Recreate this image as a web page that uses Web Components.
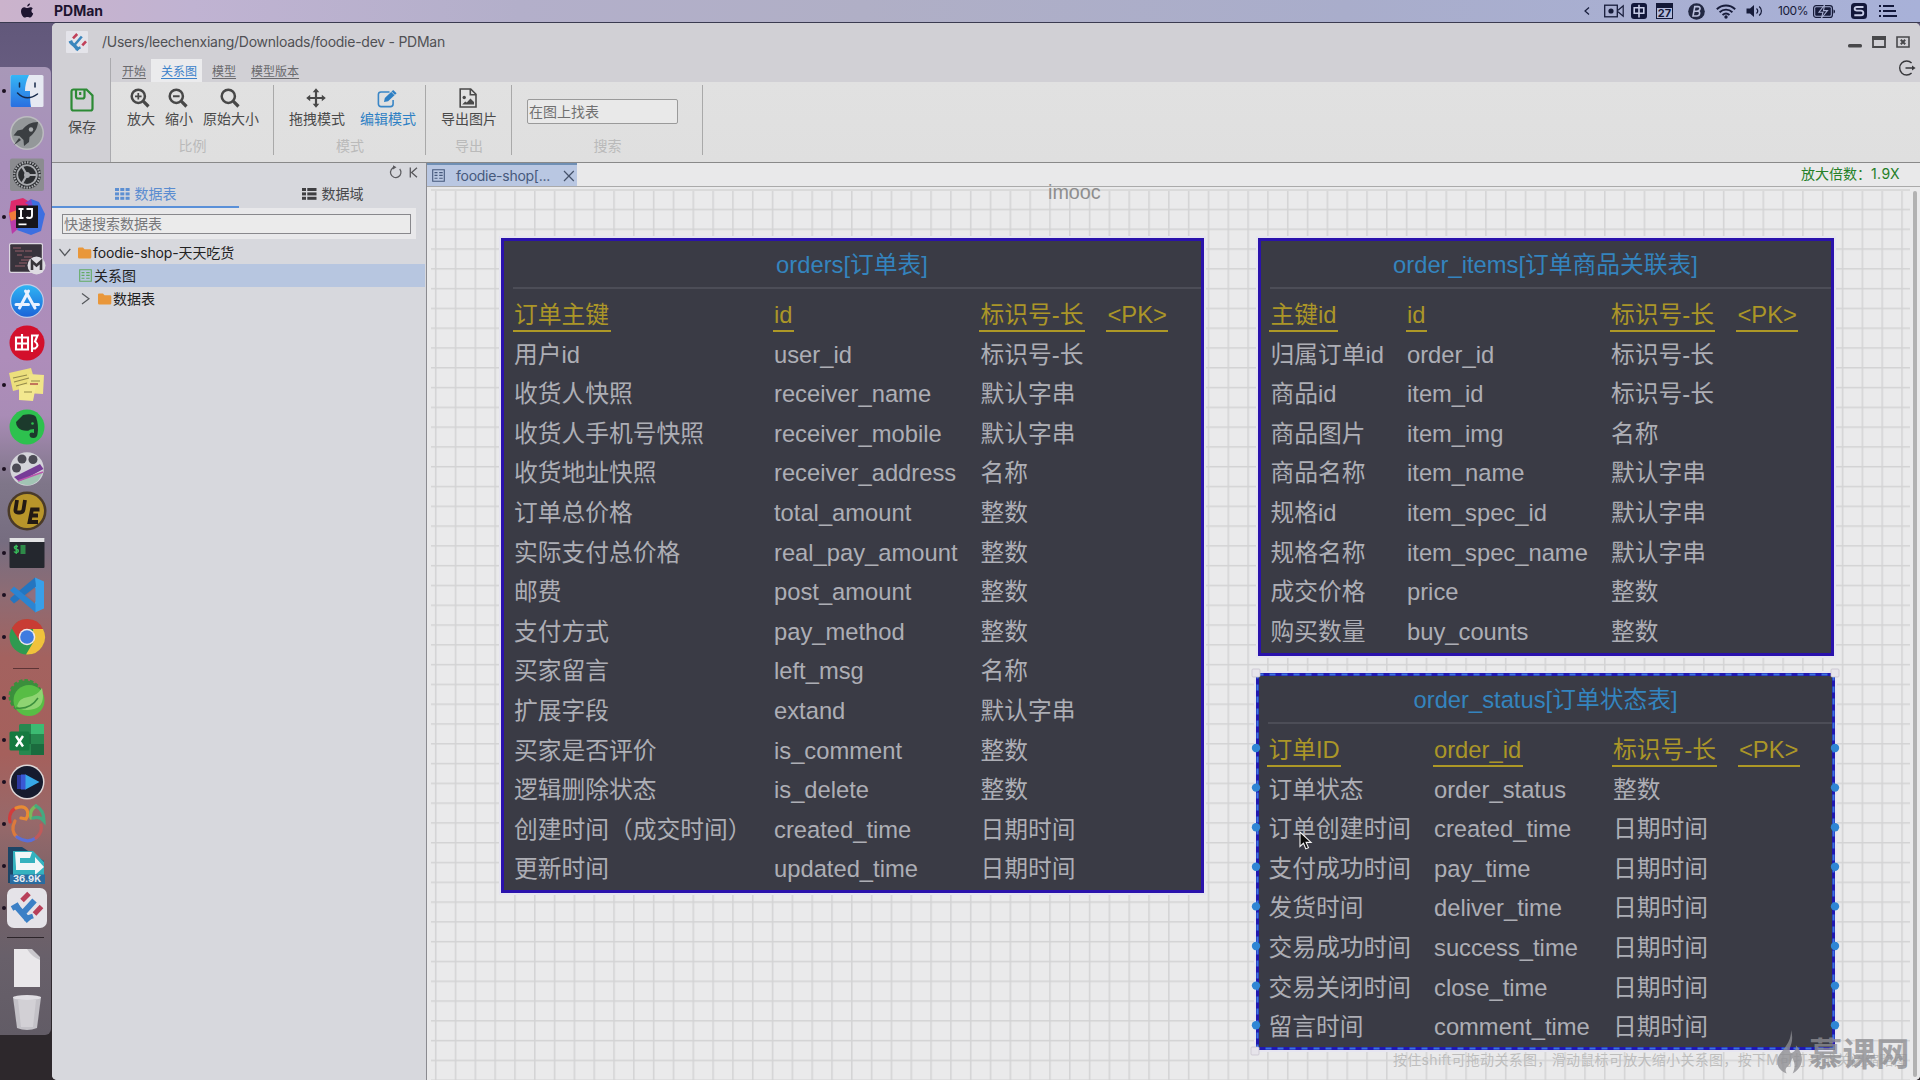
<!DOCTYPE html>
<html lang="zh-CN">
<head>
<meta charset="utf-8">
<title>PDMan</title>
<style>
  html, body { margin: 0; width: 1920px; height: 1080px; overflow: hidden; }
  body { font-family: Inter, "Noto Sans CJK SC", sans-serif; font-size: 14px; color: #444; background: #2d282c; }
</style>
</head>
<body>
<pd-desktop></pd-desktop>
<script>
const define = (name, html, ready) => {
  const tpl = document.createElement('template');
  tpl.innerHTML = html;
  customElements.define(name, class extends HTMLElement {
    connectedCallback() {
      if (this.shadowRoot) return;
      this.attachShadow({ mode: 'open' }).append(tpl.content.cloneNode(true));
      if (ready) ready.call(this, this.shadowRoot);
    }
  });
};

/* Single-line label spread evenly over a given width */
define('fit-text', `<style>:host{display:inline-block;white-space:nowrap}span{display:inline-block}</style><span><slot></slot></span>`, function (r) {
  const w = +this.getAttribute('w'), s = r.querySelector('span');
  const n = this.textContent.length;
  const now = s.getBoundingClientRect().width;
  s.style.letterSpacing = ((w - now) / n).toFixed(3) + 'px';
  this.style.width = w + 'px';
});

/* ---------- icons ---------- */
const ICONS = {
  apple: [16, 16, `<path fill="#1d1430" d="M11 .5c.1 1.6-1.300 3-2.800 3C8 2 9.400.600 11 .500zM13.800 5.600c-2 1.300-1.700 4 .400 4.900-.6 1.900-1.900 4-3.200 4-1 0-1.300-.6-2.600-.6-1.300 0-1.700.6-2.600.6C4 14.500 2 11 2 8.200 2 5.500 3.700 4.200 5.300 4.200c1.200 0 2.100.8 2.900.8.8 0 1.800-.8 3.200-.8.9 0 1.900.500 2.400 1.400z"/>`],
  cam: [20, 14, `<rect x=".7" y="1.200" width="12.600" height="11.600" fill="none" stroke="#171c3a" stroke-width="1.300"/><circle cx="7" cy="7" r="2.600" fill="#171c3a"/><path d="M14 6.200 19.200 1.800v10.400L14 7.800" fill="none" stroke="#171c3a" stroke-width="1.200"/>`],
  zh: [16, 16, `<rect width="16" height="16" rx="3" fill="#12173a"/><path d="M3.200 4.700h9.600v5.600H3.200zM8 1.800v12.600" fill="none" stroke="#c6cbe6" stroke-width="1.600"/>`],
  bt: [17, 17, `<circle cx="8.500" cy="8.500" r="8.300" fill="#222843"/><path d="M6.800 3.600h3.200c3 0 2.600 4-.6 4.400 3.400 0 2.800 5-.6 5H5zM6.400 8.200h3.400" fill="none" stroke="#b9bfdc" stroke-width="1.600"/>`],
  wifi: [20, 15, `<g fill="none" stroke="#171c3a" stroke-width="1.900"><path d="M.8 5.200c5.400-5 13-5 18.400 0M3.600 8.200c3.800-3.500 9-3.500 12.800 0M6.500 11c2.100-1.900 4.900-1.900 7 0"/></g><circle cx="10" cy="13" r="1.700" fill="#171c3a"/>`],
  vol: [18, 14, `<path d="M.5 4.500H4L8 1v12L4 9.500H.500z" fill="#171c3a"/><path d="M10.500 4.500c1.500 1.500 1.500 3.500 0 5M13.200 2.500c3 2.600 3 6.400 0 9" fill="none" stroke="#171c3a" stroke-width="1.200"/>`],
  bat: [23, 13, `<rect x=".6" y=".6" width="18.800" height="11.800" rx="2.500" fill="none" stroke="#171c3a" stroke-width="1.200"/><rect x="2.200" y="2.200" width="15.600" height="8.600" rx="1" fill="#171c3a"/><path d="M20.500 4.500c2 .6 2 3.400 0 4z" fill="#171c3a"/><path d="M11.500 0 6 7.200h4L8.500 13 14.500 5.600h-4z" fill="#171c3a" stroke="#a9b0d2" stroke-width="1.100"/>`],
  sogou: [16, 16, `<rect width="16" height="16" rx="3.500" fill="#12173a"/><path d="M12.500 4H6C2.800 4 3 7.600 6 7.600h4c3.200 0 3 4.600 0 4.600H3.300" fill="none" stroke="#c6cbe6" stroke-width="1.900"/>`],
  menu: [18, 12, `<g fill="#12173a"><rect x="0" y="0" width="2" height="2"/><rect x="0" y="5" width="2" height="2"/><rect x="0" y="10" width="2" height="2"/><rect x="4" y="0" width="11" height="2"/><rect x="4" y="5" width="13" height="2"/><rect x="4" y="10" width="14" height="2"/></g>`],
  logo: [22, 22, `<rect width="22" height="22" rx="1" fill="#e4e4ea"/><g fill="none" stroke-width="2.600"><path d="M7 7.400 11.200 3M16.300 14.400 20 10.300" stroke="#c1415a"/><path d="m4.800 11.500 4 3.500 3.800 4" stroke="#3b86bd" stroke-width="3.400"/><path d="M8.500 14 15.800 5.500" stroke="#3b86bd"/><path d="m3 11.500 3.500-1.300M9.500 18.300l5-2" stroke="#3b86bd" stroke-width="2.400"/></g>`],
  save: [24, 24, `<path d="M3.500 1.500h13L22.500 7.500v13a2 2 0 0 1-2 2h-17a2 2 0 0 1-2-2v-17a2 2 0 0 1 2-2zM6 2v6.500a2 2 0 0 0 2 2h4.500a2 2 0 0 0 2-2V2M10.200 4v3" fill="none" stroke="#2c8a35" stroke-width="2.200"/>`],
  zoomin: [20, 20, `<circle cx="8.300" cy="8.300" r="6.600" fill="none" stroke="#484848" stroke-width="2.500"/><path d="M8.300 5v6.600M5 8.300h6.600" stroke="#484848" stroke-width="1.700"/><path d="m13.200 13.200 5.300 5.300" stroke="#484848" stroke-width="3.200"/>`],
  zoomout: [20, 20, `<circle cx="8.300" cy="8.300" r="6.600" fill="none" stroke="#484848" stroke-width="2.500"/><path d="M5 8.300h6.600" stroke="#484848" stroke-width="1.900"/><path d="m13.200 13.200 5.300 5.300" stroke="#484848" stroke-width="3.200"/>`],
  zoom: [20, 20, `<circle cx="8.300" cy="8.300" r="6.600" fill="none" stroke="#484848" stroke-width="2.500"/><path d="m13.200 13.200 5.300 5.300" stroke="#484848" stroke-width="3.200"/>`],
  move: [20, 20, `<path d="M10 2v16M2 10h16" stroke="#484848" stroke-width="2.200"/><path d="m10 .2 3.300 4H6.700zM10 19.800l3.300-4H6.700zM.2 10l4-3.300v6.600zM19.800 10l-4-3.300v6.600z" fill="#484848"/>`],
  edit: [21, 19, `<path d="M12.500 3H4a2.600 2.600 0 0 0-2.600 2.600V15A2.600 2.600 0 0 0 4 17.600h9.500A2.600 2.600 0 0 0 16.100 15v-4" fill="none" stroke="#3a86c6" stroke-width="1.600"/><path d="m7 13 .8-4 8.400-8 3.400 3.300-8.500 8z" fill="#2f80c4"/><path d="m14.300 2.600 3.400 3.400" stroke="#e0e0e0" stroke-width=".8"/>`],
  image: [18, 20, `<path d="M1.200 1h10.500l5.300 5.300V19H1.200zM11.300 1v5.700H17" fill="none" stroke="#4a4a4a" stroke-width="1.600"/><circle cx="5.200" cy="9.500" r="1.700" fill="#4a4a4a"/><path d="m3.200 16.500 3-3 1.600 1 3.600-4 3.600 3.500v2.500z" fill="#4a4a4a"/>`],
  refresh: [13, 14, `<path d="M10.700 4A5.200 5.200 0 1 1 6 2.200" fill="none" stroke="#5c5c60" stroke-width="1.200"/><path d="M4 .2 7.500 2.300 4 4.400z" fill="#5c5c60"/>`],
  fold: [9, 11, `<path d="M1.300.5v10M8 .8 2.600 5.500 8 10.200" fill="none" stroke="#58585c" stroke-width="1.300"/>`],
  grid: [15, 12, `<g fill="#5c8fd2"><rect width="4" height="3"/><rect x="5.300" width="4" height="3"/><rect x="10.600" width="4" height="3"/><rect y="4.400" width="4" height="3"/><rect x="5.300" y="4.400" width="4" height="3"/><rect x="10.600" y="4.400" width="4" height="3"/><rect y="8.800" width="4" height="3"/><rect x="5.300" y="8.800" width="4" height="3"/><rect x="10.600" y="8.800" width="4" height="3"/></g>`],
  list: [15, 12, `<g fill="#3f3f42"><rect width="4" height="3"/><rect x="5.300" width="9.200" height="3"/><rect y="4.400" width="4" height="3"/><rect x="5.300" y="4.400" width="9.200" height="3"/><rect y="8.800" width="4" height="3"/><rect x="5.300" y="8.800" width="9.200" height="3"/></g>`],
  down: [14, 9, `<path d="m1.500 1 5.300 6.500L12.300 1" fill="none" stroke="#55585c" stroke-width="1.200"/>`],
  right: [9, 14, `<path d="m1 1.500 7 5.300-7 5.300" fill="none" stroke="#55585c" stroke-width="1.200"/>`],
  folder: [14, 12, `<path d="M0 1.500Q0 .5 1 .5h4l1.500 1.700H12q1.300 0 1.300 1.200v6.800q0 1.300-1.300 1.300H1.300Q0 11.500 0 10.200z" fill="#e9973a"/>`],
  sheet: [13, 13, `<path d="M.7.7h11.600v11.600H.7zM2.500 3.600h3M7.200 3.600h3.500M2.500 6.400h3M7.200 6.400h3.500M2.500 9.200h3M7.200 9.200h3.500" fill="none" stroke="currentColor" stroke-width="1.100"/>`],
  close: [12, 12, `<path d="m1 1 9.800 10M10.800 1 1 11" stroke="#46536b" stroke-width="1.200"/>`],
  min: [14, 12, `<rect y="8" width="14" height="3.600" rx="1.500" fill="#48484b"/>`],
  max: [14, 12, `<path d="M1 1h12v10H1z" fill="none" stroke="#48484b" stroke-width="1.800"/><rect width="14" height="4" fill="#48484b"/>`],
  quit: [14, 12, `<path d="M1 1h12v10H1z" fill="none" stroke="#48484b" stroke-width="1.600"/><path d="m4.800 3.800 4.400 4.400M9.200 3.800 4.800 8.200" stroke="#48484b" stroke-width="2"/>`],
  exit: [17, 16, `<path d="M12.600 3A7 7 0 1 0 12.600 13M6.500 8h8" fill="none" stroke="#38383c" stroke-width="1.400"/><path d="M13 5.400 16.600 8 13 10.600z" fill="#38383c"/>`],
  flame: [26, 44, `<path d="M14 0c2.500 9 .5 13-1 18-1 4 .5 6 2.600 4.600 2.600-1.600 3.600-4.300 3.300-7.400 4.600 5 8 13 4.700 20-1.600 3.700-4.600 6.300-8 8.300 2.300-5 3-10-.3-15.500C13.600 32 13 35 10 37c-2 2-1.600 4.600-.3 6.600C4 41.600-.3 37 .4 30.500.8 25 4.500 22.500 8 17.500 11.300 13 14.300 8 14 0z" fill="#8d8d92" fill-opacity=".78"/>`],
  cursor: [14, 20, `<path d="M1 1v14.500l3.500-3.200 2.300 5.600 2.700-1.100-2.400-5.400h5z" fill="#0c0c0c" stroke="#f2f2f2" stroke-width="1.100"/>`],
};
define('pd-icon', `<style>:host{display:inline-block;flex:none;line-height:0}svg{display:block;overflow:visible}</style><svg></svg>`, function (r) {
  const [w, h, body] = ICONS[this.getAttribute('name')];
  const s = r.querySelector('svg');
  s.setAttribute('viewBox', `0 0 ${w} ${h}`); s.setAttribute('width', w); s.setAttribute('height', h);
  s.innerHTML = body;
});

/* ---------- dock ---------- */
const APPS = {
  finder: `<defs><linearGradient id="g" x2="0" y2="1"><stop stop-color="#35b6f6"/><stop offset="1" stop-color="#2a6fe0"/></linearGradient></defs><rect x="3.500" y="4" width="33" height="32" rx="1.500" fill="#e6e9f2"/><path d="M5 4h17c-3 6-4 11-4 16h5c0 6 0 11 1 16H5q-1.500 0-1.500-1.500v-29Q3.500 4 5 4z" fill="url(#g)"/><path d="M10.500 22q9 9 20 1M12.500 12v4M28 12v4" fill="none" stroke="#16294a" stroke-width="1.500" stroke-linecap="round"/>`,
  rocket: `<circle cx="20" cy="20" r="17" fill="#bcbcc0"/><circle cx="20" cy="20" r="15.500" fill="#94989a"/><path d="M31 9c-7 0-12 3-15.500 7.500l-5 1-4 5 6 .5 4 4 .5 6 5-4 .5-5C27 20.500 30.500 16 31 9z" fill="#3b3f42"/><circle cx="24" cy="16.500" r="2.200" fill="#a9adaf"/><path d="m12 25-5 7 7-5z" fill="#3b3f42"/>`,
  gear: `<rect x="3" y="3.500" width="34" height="32.500" rx="2" fill="#8b8c90"/><circle cx="20" cy="20" r="14" fill="#2c2e31"/><circle cx="20" cy="20" r="12.700" fill="none" stroke="#a9abaf" stroke-width="2.200" stroke-dasharray="1.600 1.100"/><circle cx="20" cy="20" r="9.800" fill="none" stroke="#a9abaf" stroke-width="1.800"/><path d="M20 20h9.500M20 20l-5-8.500M20 20l-5 8.500" stroke="#a9abaf" stroke-width="2.200"/><circle cx="20" cy="20" r="3" fill="#a9abaf"/>`,
  ij: `<path d="m4 4 12-3 10 6-14 14-10-4z" fill="#dd2a6b"/><path d="m2 17 8 1 3 12-8 7z" fill="#b93ba8"/><path d="m2 16 8-3 2 8-8 3z" fill="#ef7c3a"/><path d="m24 2 8 3 6 12-4 17-10 4-14-5z" fill="#3d6fe0"/><path d="m24 2-6 4 8 4z" fill="#7a4ac8"/><rect x="9" y="8.500" width="22" height="22.500" fill="#17151a"/><path d="M11.500 12h5M14 12v9M11.500 21h5M19.500 12h5.500v6.500q0 2.500-2.500 2.500t-3-1" fill="none" stroke="#fff" stroke-width="1.900"/><rect x="11.500" y="26.500" width="8" height="1.700" fill="#fff"/>`,
  mind: `<rect x="2" y="4" width="34" height="30" rx="2" fill="#dcd6e0"/><rect x="3.200" y="5.200" width="31.600" height="27.600" rx="1" fill="#38333c"/><path d="M6 9h8M8 12h9M10 16h5M17 18h8M14 21h12M12 24h8M8 27h10M18 12h7" stroke="#96606a" stroke-width="1.200"/><circle cx="29.500" cy="26.500" r="9" fill="#dedce2"/><path d="M25 31v-8.500l4.500 4 4.500-4V31" fill="none" stroke="#37343a" stroke-width="2.600"/>`,
  store: `<defs><linearGradient id="g" x2="0" y2="1"><stop stop-color="#2fb4f3"/><stop offset="1" stop-color="#1c64d8"/></linearGradient></defs><circle cx="20" cy="20" r="17" fill="#c4cae6"/><circle cx="20" cy="20" r="15.800" fill="url(#g)"/><path d="m21.500 10-9 17M18.500 10l9.500 17M9 23.500h12.500M26 23.500h5.500" stroke="#eaf2ff" stroke-width="3" stroke-linecap="round"/>`,
  mail: `<circle cx="20" cy="20" r="17.500" fill="#d3102c"/><path d="M9 14.500h12v12H9zM15 11v15.500M9 20.500h12M25 29V12.500h5.500l-2.500 6q5 4 0 7h-3" fill="none" stroke="#fff" stroke-width="2.100"/>`,
  notes: `<path d="m2 8 22-5 5 17-23 6z" fill="#ecdf7c"/><path d="m22 9 15 1-1 19-17-1z" fill="#f0e489"/><path d="m12 19 17 2-3 15-14-1z" fill="#f3e88f"/><path d="m6 13 14-3M7 17l15-4M24 16h9M17 27h8M9 21l11-3" stroke="#948a4c" stroke-width="1.200"/><path d="M23 19h8" stroke="#b3504c" stroke-width="1.500"/>`,
  ever: `<circle cx="20" cy="20" r="17.500" fill="#2dc14e"/><path d="m9 15 7-7q10-2 13 2 3 8 1.500 17-.5 4-4 4-4 0-4-3.500 0-2 2.500-2l2 .5v-4q-4 0-5 1.500-7 1-11-3-2-2-2-5.500z" fill="#1c3a2c"/><circle cx="25.500" cy="16.500" r="1.300" fill="#2dc14e"/>`,
  film: `<circle cx="20" cy="20" r="16.800" fill="#d4d4da"/><circle cx="15" cy="10" r="4.500" fill="#4b4a54"/><circle cx="26" cy="10.500" r="4.500" fill="#4b4a54"/><circle cx="9.500" cy="19" r="4.500" fill="#4b4a54"/><path d="m7 28 26-13 3.500 5-24 13z" fill="#773d97"/><path d="m10 33 26-10-5 9q-10 8-21 1z" fill="#a2c4b4"/><path d="m11 32 25-9" stroke="#bb55ad" stroke-width="1.600"/>`,
  ue: `<circle cx="20" cy="20" r="19.500" fill="#4a3a28"/><circle cx="20" cy="20" r="17" fill="#b8952a"/><path d="m10 9-1.500 9.500q-.5 3 2.500 3h2q3 0 3.500-3L18 9M32.500 18.500h-7.500l-2.500 12.500h8.500M24 24.500h7" fill="none" stroke="#231a14" stroke-width="3.800"/>`,
  term: `<rect x="2.500" y="5" width="35" height="30" rx="1" fill="#24272e"/><path d="M2.500 5h35v4h-35z" fill="#e2e2e4"/><path d="M11 13.500q-4-1-3.600 1.200c.4 2.500 4 .6 4 3.300 0 2-3.600 1.800-4.400.5M9.200 11.800V21" fill="none" stroke="#37bd5a" stroke-width="1.400"/><rect x="13.500" y="12" width="5" height="9" fill="#2e8a48"/>`,
  code: `<path d="m28 2.500 9 4v27l-9 4z" fill="#389fe8"/><path d="m28 2.500 1 9L7 28.500l-4-4 1-2z" fill="#2475c0"/><path d="M28.500 37.500V29L7 11.500l-4 4z" fill="#2b84d2"/><path d="M28.500 13v14L19.500 20z" fill="#8f7080"/>`,
  chrome: `<circle cx="20" cy="20" r="17.500" fill="#2f9a50"/><path d="M4.800 11.300A17.500 17.500 0 0 1 36 12H20l-8 11z" fill="#c83c34"/><path d="M36 12A17.500 17.500 0 0 1 19 37.500l8-13.500-1-12z" fill="#f0c23c"/><circle cx="20" cy="20" r="8.300" fill="#f0e8e8"/><circle cx="20" cy="20" r="6.800" fill="#3f7be0"/>`,
  spring: `<circle cx="18.500" cy="18" r="15.500" fill="#3b8f3c" stroke="#3b8f3c" stroke-width="3" stroke-dasharray="3.500 2"/><circle cx="22" cy="22.500" r="15.500" fill="#58bd45"/><path d="M35 10q4 18-8 21-12 3-17-3 2-8 11-9 9-1 14-9z" fill="#8fd472"/><path d="M9 30q14 2 22-10" fill="none" stroke="#3b8f3c" stroke-width="1.500"/>`,
  excel: `<rect x="12" y="4" width="25" height="31" rx="1.500" fill="#27884f"/><path d="M24 4h13v10H24z" fill="#3cbb72"/><path d="M12 14h12v10H12z" fill="#1b6b3e"/><path d="M24 24h13v11H24z" fill="#1b6b3e"/><rect x="2.500" y="11.500" width="20" height="19" rx="1.500" fill="#157a40"/><path d="m9 16 7 10.500M16 16 9 26.500" stroke="#fff" stroke-width="2.400"/>`,
  play: `<circle cx="20" cy="20" r="17.500" fill="#ddd6d6"/><circle cx="20" cy="20" r="16" fill="#161b2e"/><path d="M10 13h5v14h-5z" fill="#2c38a0"/><path d="M14 12.500h5v15h-5z" fill="#3a58d4"/><path d="m18.500 12.500 14 7.500-14 7.500z" fill="#37a8e8"/>`,
  heart: `<g fill="none" stroke-width="3.200" stroke-linecap="round"><path d="M3 18Q1 8 9 4" stroke="#d23c3c"/><path d="M9 4q8-3 11 2 2 5-1 9l-5-1" stroke="#e88a34"/><path d="M24 14q-2-8 5-12" stroke="#7ab85a"/><path d="M29 2q8 4 8 15-4-5-11-3" stroke="#45a980"/><path d="M8 17q-5 10 2 16" stroke="#dc7a3c"/><path d="M10 33q10 7 19 1" stroke="#5a6fd8"/><path d="M29 34q7-6 5-13" stroke="#c05a5a"/></g>`,
  neat: `<path d="M1 1h14l22 14v22H1z" fill="#1d4566"/><path d="M6 5h20l11 11v21H6z" fill="#34b2bf"/><path d="M8 6h17l-2 6H13v9H9z" fill="#f0f6f8"/><path d="M9 17h19v-6l9 10-9 8v-5H9z" fill="#f0f6f8"/><rect x="3" y="28.500" width="35" height="9.500" fill="#2a6ba0"/>`,
  pdman: `<rect x="0" y="0" width="40" height="40" rx="7" fill="#e5e3e8"/><g fill="none"><path d="m15 12.500 7-7M27.500 26l7-7.500" stroke="#b8405a" stroke-width="5"/><path d="m8 17 7 8 7 8M17 24 27.500 12.500" stroke="#3c80c6" stroke-width="6"/><path d="m5 20.500 7-4M17 31l9-3" stroke="#3c80c6" stroke-width="5"/></g>`,
  doc: `<path d="M7 1h17l9 9v29H7z" fill="#e9e7ea"/><path d="M20 1q5 8 13 11V9l-8-8z" fill="#c9c7cc"/>`,
  trash: `<path d="m6 5 4 31q10 4 20 0l4-31z" fill="#c3c1c7"/><path d="m11 8 3 27h12l3-27z" fill="#d2d0d5"/><ellipse cx="20" cy="5.500" rx="14" ry="2.500" fill="#e0dee3"/>`,
};
define('dock-item', `<style>
:host{display:grid;grid-template-columns:7px 40px;height:42px;align-items:center;width:50px}
i{width:4px;height:4px;border-radius:50%;margin-left:2px}
:host([on]) i{background:#1c1020}
div{position:relative;height:40px}
svg{display:block;width:40px;height:40px}
b{position:absolute;left:0;right:0;top:28px;text-align:center;font:700 9.500px/10px Inter,sans-serif;color:#e6ecf2}
</style><i></i><div><svg viewBox="0 0 40 40"></svg><b><slot></slot></b></div>`, function (r) {
  r.querySelector('svg').innerHTML = APPS[this.getAttribute('app')];
});
define('mac-dock', `<style>
:host{display:flex;flex-direction:column;width:51px;box-sizing:border-box;height:968px;margin-top:44px;padding-top:3px;border-radius:0 6px 6px 0;
background:linear-gradient(#a898b8 0,#a88fbb 10%,#ae8dba 30%,#a98cb6 36%,#7f7689 43%,#766d80 49%,#8c6c75 54%,#a3625f 61%,#a5605c 71%,#97696a 78%,#746168 86%,#68606a 92%,#625c66 100%)}
hr{border:0;height:1px;width:26px;background:#5d3436;margin:10px 0 8px 13px;flex:none}
hr.b{background:#2c2429;width:37px;margin:8px 0 8px 7px}
dock-item{flex:none}.l{height:44px}
</style>
<dock-item app="finder" on></dock-item><dock-item app="rocket"></dock-item><dock-item app="gear"></dock-item><dock-item app="ij" on></dock-item><dock-item app="mind"></dock-item><dock-item app="store"></dock-item><dock-item app="mail"></dock-item><dock-item app="notes" on></dock-item><dock-item app="ever"></dock-item><dock-item app="film" on></dock-item><dock-item app="ue"></dock-item><dock-item app="term" on></dock-item><dock-item app="code" on></dock-item><dock-item app="chrome" on></dock-item><hr>
<dock-item app="spring" on></dock-item><dock-item app="excel" on></dock-item><dock-item app="play" on></dock-item><dock-item app="heart" on></dock-item><dock-item app="neat" on>36.9K</dock-item><dock-item app="pdman" on></dock-item><hr class="b">
<dock-item class="l" app="doc"></dock-item><dock-item class="l" app="trash"></dock-item>`);

/* ---------- menu bar ---------- */
define('mac-menubar', `<style>
:host{display:flex;align-items:center;height:23px;box-sizing:border-box;border-bottom:1px solid #3a3a50;color:#171c3a;
background:linear-gradient(90deg,#cbb3cc 0,#c0b3d2 10%,#b3afca 27%,#b0afc6 45%,#a9adcb 70%,#a8b1d8 100%)}
.l{display:flex;align-items:center;padding-left:19px;gap:19px;color:#1d1430;font-weight:700;font-size:14px;padding-bottom:1px}
.r{margin-left:auto;display:flex;align-items:center;padding-right:23px}
.r>*{display:block}
.cal{width:17px;height:16px;background:#141938;color:#141938;display:flex;align-items:flex-end;justify-content:center}
.cal b{background:#b4bbdb;width:14.500px;height:10.500px;margin-bottom:1px;font:700 11px/11px Inter,sans-serif;text-align:center}
</style>
<div class="l"><pd-icon name="apple"></pd-icon><fit-text w="49">PDMan</fit-text></div>
<div class="r">
<svg width="6" height="8" style="margin-right:14px"><path d="M5 .5 1 4l4 3.500" fill="none" stroke="#171c3a" stroke-width="1.200"/></svg>
<pd-icon name="cam" style="margin-right:7px"></pd-icon><pd-icon name="zh" style="margin-right:9px"></pd-icon>
<div class="cal" style="margin-right:15px"><b>27</b></div>
<pd-icon name="bt" style="margin-right:11px"></pd-icon><pd-icon name="wifi" style="margin-right:10px"></pd-icon><pd-icon name="vol" style="margin-right:14px"></pd-icon>
<fit-text w="30" style="font-size:12px;margin:0 5px 1px 0">100%</fit-text><pd-icon name="bat" style="margin-right:15px"></pd-icon><pd-icon name="sogou" style="margin-right:12px"></pd-icon><pd-icon name="menu"></pd-icon>
</div>`);

/* ---------- ribbon ---------- */
define('ribbon-group', `<style>
:host{display:flex;flex-direction:column;align-items:center;box-sizing:border-box;height:70px;margin-top:3px;border-right:1px solid #a9a9a9}
.row{display:flex;height:52px;padding-top:3px;box-sizing:border-box;width:100%}
.cap{font-size:14px;line-height:18px;color:#bababa;padding-left:1px}
</style><div class="row"><slot></slot></div><div class="cap"></div>`, function (r) {
  r.querySelector('.cap').textContent = this.getAttribute('caption');
});
define('tool-button', `<style>
:host{display:flex;flex-direction:column;align-items:center;font-size:14px;line-height:18px;color:#4a4a4a;white-space:nowrap;width:max-content}
:host([on]){color:#2f80c4}
div{height:20px;display:flex;align-items:center;margin:0 2px 2px 0}
</style><div></div><slot></slot>`, function (r) {
  const i = document.createElement('pd-icon');
  i.setAttribute('name', this.getAttribute('icon'));
  r.querySelector('div').append(i);
});
define('pd-header', `<style>
:host{display:grid;grid-template-columns:59px 1fr;grid-template-rows:35px 24px 80px;height:140px;background:#d1d0d5;border-bottom:1px solid #898989;box-sizing:border-box}
.title{grid-column:1/3;display:flex;align-items:center;padding:3px 10px 0 14px;height:35px;box-sizing:border-box;font-size:14px;color:#505054;gap:14px}
.title fit-text{margin-bottom:1px}
.win{margin-left:auto;display:flex;gap:10px}
.save{grid-row:2/4;border-right:1px solid #aaaaae;box-sizing:border-box;display:flex;flex-direction:column;align-items:center;padding-top:30px;line-height:18px;gap:6px;color:#4a4a4a;padding-left:2px}
.tabs{display:flex;align-items:stretch;font-size:12px;line-height:27px;color:#6a6a6e}
.tabs span{text-decoration:underline;text-underline-offset:2px;text-decoration-thickness:1px}
.tabs .on{background:#ebebed;color:#3c82ca;padding:0 5px 0 10px;margin:1px 10px 0 5px;line-height:25px}
.tabs pd-icon{margin:2px 4px 0 auto;align-self:flex-start}
.rib{display:flex;background:linear-gradient(#e1e1e1,#dfdfdf)}
.in{box-sizing:border-box;border:1px solid #9a9a9a;border-radius:2px;width:151px;height:25px;background:#e9e9e9;padding-left:1px;font-size:14px;color:#707070;line-height:23px}
</style>
<div class="title"><pd-icon name="logo"></pd-icon><fit-text w="343">/Users/leechenxiang/Downloads/foodie-dev - PDMan</fit-text>
<div class="win"><pd-icon name="min"></pd-icon><pd-icon name="max"></pd-icon><pd-icon name="quit"></pd-icon></div></div>
<div class="save"><pd-icon name="save"></pd-icon>保存</div>
<div class="tabs"><span style="margin-left:11px">开始</span><span class="on">关系图</span><span style="margin-right:15px">模型</span><span>模型版本</span><pd-icon name="exit"></pd-icon></div>
<div class="rib">
<ribbon-group caption="比例" style="width:163px"><tool-button icon="zoomin" style="margin-left:16px">放大</tool-button><tool-button icon="zoomout" style="margin-left:10px">缩小</tool-button><tool-button icon="zoom" style="margin-left:10px">原始大小</tool-button></ribbon-group>
<ribbon-group caption="模式" style="width:152px"><tool-button icon="move" style="margin-left:15px">拖拽模式</tool-button><tool-button on icon="edit" style="margin-left:15px">编辑模式</tool-button></ribbon-group>
<ribbon-group caption="导出" style="width:86px"><tool-button icon="image" style="margin-left:15px">导出图片</tool-button></ribbon-group>
<ribbon-group caption="搜索" style="width:191px"><div class="in" style="margin:11px 0 0 15px">在图上找表</div></ribbon-group>
</div>`);

/* ---------- sidebar ---------- */
define('tree-row', `<style>
:host{display:flex;align-items:center;height:23px;line-height:23px;font-size:14px;color:#222;width:373px;box-sizing:border-box;white-space:nowrap}
:host([on]){background:#b7c6e0}
.c{width:14px;display:flex;justify-content:center;margin-right:6px}
.i{width:15px;display:flex}
</style><div class="c"></div><div class="i"></div><slot></slot>`, function (r) {
  for (const [k, sel] of [['caret', '.c'], ['icon', '.i']]) {
    if (!this.hasAttribute(k)) continue;
    const i = document.createElement('pd-icon');
    i.setAttribute('name', this.getAttribute(k));
    if (k === 'icon') i.style.color = '#63ab62';
    r.querySelector(sel).append(i);
  }
});
define('pd-sidebar', `<style>
:host{display:flex;flex-direction:column;width:375px;box-sizing:border-box;border-right:1px solid #8b8b90;background:#d7d8dd}
.tools{height:20px;display:flex;justify-content:flex-end;align-items:center;gap:7px;padding:0 8px 2px 0;box-sizing:border-box}
.tabs{display:flex;height:25px}
.tabs div{flex:1;display:flex;justify-content:center;align-items:center;gap:5px;line-height:20px;padding-bottom:3px;box-sizing:border-box;padding-top:2px;border-bottom:2px solid transparent;color:#48484c}
.tabs .on{color:#5a8cd0;border-color:#5a90d8}
.s{background:#e8e8ea;width:364px;height:31px;box-sizing:border-box;padding:6px 0 0 10px}
.in{width:349px;height:20px;box-sizing:border-box;border:1px solid #88888c;background:#ebebeb;line-height:18px;padding-left:1px;color:#77777a}
</style>
<div class="tools"><pd-icon name="refresh"></pd-icon><pd-icon name="fold"></pd-icon></div>
<div class="tabs"><div class="on"><pd-icon name="grid"></pd-icon>数据表</div><div><pd-icon name="list"></pd-icon>数据域</div></div>
<div class="s"><div class="in">快速搜索数据表</div></div>
<tree-row caret="down" icon="folder" style="padding-left:6px;margin-top:2px"><fit-text w="141">foodie-shop-天天吃货</fit-text></tree-row>
<tree-row on icon="sheet" style="padding-left:7px">关系图</tree-row>
<tree-row caret="right" icon="folder" style="padding-left:26px">数据表</tree-row>`);

/* ---------- diagram ---------- */
define('er-table', `<style>
:host{display:block;position:absolute;box-sizing:border-box;background:#3a3b45;border:3px solid #2a12ac;box-shadow:0 0 0 2px #e6e5f0;
font:23.750px/39.600px "Liberation Sans","Noto Sans CJK SC",sans-serif;color:#adaeb5}
h3{margin:0;font:inherit;color:#3484be;text-align:center;height:48px;line-height:48px;box-sizing:border-box;border-bottom:2px solid #4c4d57;margin-left:9px;padding-right:9px}
.row{display:grid;white-space:nowrap;height:39.600px}
.body{padding-top:6px}
.pk{color:#ab9628}
.pk span{display:inline-block;height:36.500px;padding:0 1.500px;margin-left:-1.500px;box-sizing:border-box;border-bottom:2px solid #ad9826}
:host([sel]){border-color:#2018b0}
svg{position:absolute;inset:-3px;overflow:visible;display:none}
:host([sel]) svg{display:block}
</style><h3></h3><div class="body"></div><svg></svg>`, function (r) {
  r.querySelector('h3').textContent = this.getAttribute('name');
  const body = r.querySelector('.body');
  const cols = this.getAttribute('cols');
  const lines = this.textContent.trim().split('\n');
  lines.forEach((line, i) => {
    const row = document.createElement('div');
    row.className = 'row' + (i ? '' : ' pk');
    row.style.gridTemplateColumns = cols;
    row.style.paddingLeft = this.getAttribute('pad') + 'px';
    line.trim().split('|').forEach(t => {
      const cell = document.createElement('div'), s = document.createElement('span');
      s.textContent = t; cell.append(s); row.append(cell);
    });
    body.append(row);
  });
  if (this.hasAttribute('sel')) {
    const w = this.offsetWidth, h = this.offsetHeight, s = r.querySelector('svg');
    s.setAttribute('width', w); s.setAttribute('height', h);
    let g = `<rect x="1.500" y="1.500" width="${w - 3}" height="${h - 3}" fill="none" stroke="#3b74de" stroke-width="2" stroke-dasharray="6 6"/>`;
    for (let i = 0; i < lines.length; i++) g += `<circle cx="0" cy="${75 + i * 39.600}" r="4.200" fill="#2f86d4"/><circle cx="${w}" cy="${75 + i * 39.600}" r="4.200" fill="#2f86d4"/>`;
    for (const [x, y] of [[0, 0], [w, 0], [-1, h + 1]]) g += `<rect x="${x - 4}" y="${y - 4}" width="8" height="8" rx="1" fill="#e6e4ea" stroke="#c4c0cc" stroke-width=".7"/>`;
    s.innerHTML = g;
  }
});
define('pd-canvas', `<style>
:host{display:block;position:relative;flex:1;background:#eaeaeb;border-top:1px solid #aaa;box-sizing:border-box}
.grid{position:absolute;left:0;top:0}
.im{position:absolute;left:621px;top:-6px;font:19.750px/23px "Liberation Sans",sans-serif;color:#8e8e8e}
.bar{position:absolute;left:1486px;top:4px;width:4px;height:886px;background:#b2b2b2;border-radius:2px}
.hint{position:absolute;left:966px;top:863px;font-size:14px;line-height:20px;color:#bdbdbd;white-space:nowrap;width:516px}
.wm{position:absolute;left:1350px;top:843px;display:flex;align-items:center;gap:6px;font:700 33.500px/44px "Noto Sans CJK SC",sans-serif;color:rgba(142,142,146,.78)}
.cur{position:absolute;left:872px;top:644px}
</style>
<svg class="grid" width="1493" height="894"><defs><pattern id="p" x="7.900" y="21.700" width="19.815" height="19.790" patternUnits="userSpaceOnUse"><path d="M.8 0v19.800M0 .8h19.820" stroke="#d3d3d4" stroke-width="1.500" fill="none"/></pattern></defs><rect x="4" y="3.500" width="1479" height="890" fill="url(#p)"/><path d="M4 3h1479" stroke="#dadada" stroke-width="2"/></svg>
<div class="im">imooc</div>
<div class="hint"><fit-text w="515">按住shift可拖动关系图，滑动鼠标可放大缩小关系图，按下M可打开或关闭缩略图</fit-text></div>
<er-table name="orders[订单表]" style="left:73.500px;top:51px;width:703px;height:655px" pad="10.5" cols="260px 206.5px 127px 80px">订单主键|id|标识号-长|&lt;PK&gt;
用户id|user_id|标识号-长
收货人快照|receiver_name|默认字串
收货人手机号快照|receiver_mobile|默认字串
收货地址快照|receiver_address|名称
订单总价格|total_amount|整数
实际支付总价格|real_pay_amount|整数
邮费|post_amount|整数
支付方式|pay_method|整数
买家留言|left_msg|名称
扩展字段|extand|默认字串
买家是否评价|is_comment|整数
逻辑删除状态|is_delete|整数
创建时间（成交时间）|created_time|日期时间
更新时间|updated_time|日期时间</er-table>
<er-table name="order_items[订单商品关联表]" style="left:830.500px;top:51px;width:576px;height:418px" pad="10" cols="136.5px 204px 126.5px 80px">主键id|id|标识号-长|&lt;PK&gt;
归属订单id|order_id|标识号-长
商品id|item_id|标识号-长
商品图片|item_img|名称
商品名称|item_name|默认字串
规格id|item_spec_id|默认字串
规格名称|item_spec_name|默认字串
成交价格|price|整数
购买数量|buy_counts|整数</er-table>
<er-table sel name="order_status[订单状态表]" style="left:829px;top:486px;width:579px;height:377px" pad="9.5" cols="165.5px 179px 126px 80px">订单ID|order_id|标识号-长|&lt;PK&gt;
订单状态|order_status|整数
订单创建时间|created_time|日期时间
支付成功时间|pay_time|日期时间
发货时间|deliver_time|日期时间
交易成功时间|success_time|日期时间
交易关闭时间|close_time|日期时间
留言时间|comment_time|日期时间</er-table>
<pd-icon class="cur" name="cursor"></pd-icon>
<div class="wm"><pd-icon name="flame"></pd-icon>慕课网</div>
<div class="bar"></div>`);
define('pd-workspace', `<style>
:host{display:flex;flex-direction:column;flex:1;min-width:0;background:#e8e8e8}
.tabs{display:flex;height:23px;align-items:stretch;background:#e9e9ea}
.tab{display:flex;align-items:center;width:150px;box-sizing:border-box;border-top:2px solid #6f8fb4;background:#b9c7e2;color:#46597c;padding:0 2px 0 5px}
.tab pd-icon:last-child{margin-left:auto}
.z{margin-left:auto;color:#258028;line-height:22px;padding-right:20px;display:flex}
</style>
<div class="tabs"><div class="tab"><pd-icon name="sheet" style="margin-right:11px"></pd-icon><fit-text w="94">foodie-shop[...</fit-text><pd-icon name="close"></pd-icon></div><div class="z">放大倍数：<fit-text w="29">1.9X</fit-text></div></div>
<pd-canvas></pd-canvas>`);
define('pd-window', `<style>
:host{display:flex;flex-direction:column;width:1868px;height:1057px;border-radius:5px;overflow:hidden;background:#d1d0d5}
.m{display:flex;flex:1;min-height:0}
</style><pd-header></pd-header><div class="m"><pd-sidebar></pd-sidebar><pd-workspace></pd-workspace></div>`);
define('pd-desktop', `<style>
:host{display:flex;flex-direction:column;width:1920px;height:1080px;overflow:hidden;background:linear-gradient(#5f5678 0,#675c80 7%,#4a3f55 50%,#2d282c 95%)}
.m{display:flex;gap:1px}
</style><mac-menubar></mac-menubar><div class="m"><mac-dock></mac-dock><pd-window></pd-window></div>`);
</script>
</body>
</html>
